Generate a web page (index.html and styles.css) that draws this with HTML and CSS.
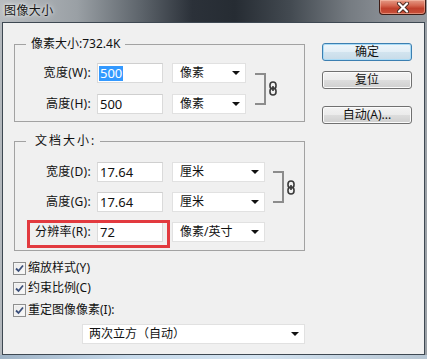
FILE: index.html
```html
<!DOCTYPE html>
<html lang="zh-CN">
<head>
<meta charset="utf-8">
<title>图像大小</title>
<link rel="stylesheet" href="styles.css">
</head>
<body>
<div class="win">
  <div class="titlebar">
    <span class="title">图像大小</span>
    <div class="close">
      <svg width="14" height="11" viewBox="0 0 14 11">
        <path d="M3 1.5 L11 9.5 M11 1.5 L3 9.5" stroke="#4a2a22" stroke-width="4" stroke-linecap="round"/>
        <path d="M3 1.5 L11 9.5 M11 1.5 L3 9.5" stroke="#ffffff" stroke-width="2.2" stroke-linecap="round"/>
      </svg>
    </div>
  </div>
  <div class="client">
    <div class="leftcol">
      <fieldset class="group g1">
        <legend>像素大小:732.4K</legend>
        <div class="pair">
          <div class="rows gap11">
            <div class="row">
              <span class="lbl">宽度(W):</span>
              <div class="input"><span class="hl">500</span></div>
              <div class="select w74"><span>像素</span><i class="arrow"></i></div>
            </div>
            <div class="row">
              <span class="lbl">高度(H):</span>
              <div class="input"><span>500</span></div>
              <div class="select w74"><span>像素</span><i class="arrow"></i></div>
            </div>
          </div>
          <div class="link l1">
            <span class="bracket"></span>
            <svg class="chain" width="8" height="15" viewBox="0 0 8 15">
              <rect x="1" y="1" width="6" height="7" rx="3" fill="none" stroke="#3a3a3a" stroke-width="1.6"/>
              <rect x="1" y="7" width="6" height="7" rx="3" fill="none" stroke="#3a3a3a" stroke-width="1.6"/>
              <path d="M4 5 V10" stroke="#3a3a3a" stroke-width="1.6"/>
            </svg>
          </div>
        </div>
      </fieldset>

      <fieldset class="group g2">
        <legend class="spaced">文档大小:</legend>
        <div class="pair">
          <div class="rows gap10">
            <div class="row">
              <span class="lbl">宽度(D):</span>
              <div class="input"><span>17.64</span></div>
              <div class="select w93"><span>厘米</span><i class="arrow"></i></div>
            </div>
            <div class="row">
              <span class="lbl">高度(G):</span>
              <div class="input"><span>17.64</span></div>
              <div class="select w93"><span>厘米</span><i class="arrow"></i></div>
            </div>
          </div>
          <div class="link l2">
            <span class="bracket"></span>
            <svg class="chain" width="8" height="15" viewBox="0 0 8 15">
              <rect x="1" y="1" width="6" height="7" rx="3" fill="none" stroke="#3a3a3a" stroke-width="1.6"/>
              <rect x="1" y="7" width="6" height="7" rx="3" fill="none" stroke="#3a3a3a" stroke-width="1.6"/>
              <path d="M4 5 V10" stroke="#3a3a3a" stroke-width="1.6"/>
            </svg>
          </div>
        </div>
        <div class="row res">
          <span class="lbl">分辨率(R):</span>
          <div class="input"><span>72</span></div>
          <div class="select w93"><span>像素/英寸</span><i class="arrow"></i></div>
          <span class="redbox"></span>
        </div>
      </fieldset>

      <div class="checks">
        <div class="check c1"><span class="box"><svg width="9" height="9" viewBox="0 0 9 9"><path d="M1 4.5 L3.5 7 L8 1.5" fill="none" stroke="#3b4f7a" stroke-width="1.8"/></svg></span><span>缩放样式(Y)</span></div>
        <div class="check"><span class="box"><svg width="9" height="9" viewBox="0 0 9 9"><path d="M1 4.5 L3.5 7 L8 1.5" fill="none" stroke="#3b4f7a" stroke-width="1.8"/></svg></span><span>约束比例(C)</span></div>
        <div class="check c3"><span class="box"><svg width="9" height="9" viewBox="0 0 9 9"><path d="M1 4.5 L3.5 7 L8 1.5" fill="none" stroke="#3b4f7a" stroke-width="1.8"/></svg></span><span>重定图像像素(I):</span></div>
      </div>
      <div class="select wide"><span>两次立方（自动）</span><i class="arrow"></i></div>
    </div>

    <div class="buttons">
      <div class="btn default">确定</div>
      <div class="btn">复位</div>
      <div class="btn auto">自动(A)...</div>
    </div>
  </div>
  <div class="bottomglass"></div>
</div>
</body>
</html>
```
FILE: styles.css
```css
html, body {
  margin: 0;
  padding: 0;
}
body {
  width: 427px;
  height: 359px;
  overflow: hidden;
  font-family: "Noto Sans", "Noto Sans CJK SC", sans-serif;
  font-size: 12px;
  line-height: 16px;
  color: #111;
}
.win {
  width: 427px;
  height: 359px;
  display: flex;
  flex-direction: column;
  background: linear-gradient(to right, #b3b8bd 0%, #9ea4aa 50%, #9aa0a6 100%);
}
.titlebar {
  height: 22px;
  flex: none;
  display: flex;
  align-items: flex-start;
  justify-content: space-between;
  background: linear-gradient(to right, #b8bcc0 0%, #9aa0a5 18%, #5d646b 33%, #2b3139 45%, #262c33 55%, #434a51 68%, #767c82 82%, #8d9298 92%, #969ba0 100%);
}
.title {
  margin: 3px 0 0 4px;
  line-height: 16px;
  font-size: 12px;
  letter-spacing: 0.4px;
  color: #161616;
  text-shadow: 0 0 6px rgba(255,255,255,0.9), 0 0 3px rgba(255,255,255,0.8);
}
.close {
  width: 47px;
  height: 15px;
  margin-right: 1px;
  box-sizing: border-box;
  border: 1px solid #3d1c15;
  border-top: none;
  border-radius: 0 0 4px 4px;
  background: linear-gradient(#e59a86 0%, #d4654f 40%, #c0402c 60%, #c9513a 100%);
  box-shadow: inset 0 0 0 1px rgba(255,210,190,0.45);
  display: flex;
  align-items: center;
  justify-content: center;
}
.client {
  flex: none;
  margin-left: 2px;
  width: 423px;
  height: 333px;
  box-sizing: border-box;
  border: 1px solid #3e4852;
  background: #f0f0f0;
  display: flex;
  align-items: flex-start;
  padding: 14px 0 0 10px;
}
.bottomglass {
  flex: 1;
  background: linear-gradient(to right, #9fb3c6 0%, #c6d9ea 30%, #d3e3f1 60%, #b7c6d3 100%);
}
.leftcol {
  width: 292px;
  display: flex;
  flex-direction: column;
}
.group {
  margin: 0 0 0 1px;
  width: 291px;
  box-sizing: border-box;
  border: 1px solid #a2a2a2;
  padding: 0;
  min-width: 0;
}
.group legend {
  margin-left: 11px;
  padding: 0 5px;
  line-height: 14px;
  font-size: 12px;
}
.group legend.spaced {
  padding: 0 4px 0 9px;
  letter-spacing: 2px;
}
.g1 {
  padding: 12px 0 7px 0;
}
.g2 {
  margin-top: 12px;
  padding: 14px 0 8px 0;
}
.pair {
  display: flex;
  align-items: center;
}
.rows {
  display: flex;
  flex-direction: column;
}
.gap11 { gap: 11px; }
.gap10 { gap: 10px; }
.row {
  height: 20px;
  display: flex;
  align-items: center;
}
.row.res {
  margin-top: 10px;
  position: relative;
}
.lbl {
  width: 76px;
  margin-right: 6px;
  text-align: right;
  white-space: nowrap;
  letter-spacing: 0.3px;
}
.input {
  width: 66px;
  height: 20px;
  box-sizing: border-box;
  border: 1px solid #dadada;
  border-top-color: #cfcfcf;
  background: #fff;
  margin-right: 9px;
  display: flex;
  align-items: center;
  padding-left: 1px;
  font-size: 13px;
}
.input span {
  padding: 0 1px;
  line-height: 15px;
}
.input .hl {
  background: #3399ff;
  color: #fff;
}
.select {
  height: 20px;
  box-sizing: border-box;
  border: 1px solid #e1e1e1;
  background: #fff;
  display: flex;
  align-items: center;
  justify-content: space-between;
  padding: 0 5px 0 7px;
  font-size: 12px;
}
.w74 { width: 74px; }
.w93 { width: 93px; }
.arrow {
  width: 0;
  height: 0;
  border-left: 4px solid transparent;
  border-right: 4px solid transparent;
  border-top: 4px solid #111;
}
.link {
  display: flex;
  align-items: center;
}
.l1 { margin-left: 9px; }
.l2 { margin-left: 8px; }
.bracket {
  width: 9px;
  height: 28px;
  border: 2px solid #8c8c8c;
  border-left: none;
}
.chain {
  margin-left: 3px;
}
.redbox {
  position: absolute;
  left: 12px;
  top: -2px;
  width: 143px;
  height: 28px;
  box-sizing: border-box;
  border: 3px solid #e23a3f;
}
.checks {
  margin-top: 7px;
  display: flex;
  flex-direction: column;
}
.check {
  height: 20px;
  display: flex;
  align-items: center;
}
.check.c3 { margin-top: 2px; }
.box {
  width: 13px;
  height: 13px;
  box-sizing: border-box;
  border: 1px solid #8e8f8f;
  background: linear-gradient(135deg, #e9e9e9 0%, #fafafa 100%);
  box-shadow: inset 0 0 0 1px #f4f4f4;
  margin-right: 2px;
  display: flex;
  align-items: center;
  justify-content: center;
}
.select.wide {
  margin: 4px 0 0 69px;
  width: 223px;
  padding-left: 6px;
}
.buttons {
  margin: 6px 0 0 17px;
  display: flex;
  flex-direction: column;
}
.btn {
  width: 90px;
  height: 18px;
  box-sizing: border-box;
  border: 1px solid #707070;
  border-radius: 3px;
  background: linear-gradient(#f3f3f3 0%, #ebebeb 50%, #dddddd 51%, #cfcfcf 100%);
  box-shadow: inset 0 0 0 1px #fbfbfb;
  display: flex;
  align-items: center;
  justify-content: center;
  font-size: 12px;
  line-height: 14px;
  margin-bottom: 10px;
  color: #111;
}
.btn.default {
  border-color: #3c7fb1;
  background: linear-gradient(#eef6fb 0%, #e2eef6 50%, #d2e4ef 51%, #c8dbe8 100%);
  box-shadow: inset 0 0 0 1px #a9dbf6;
}
.btn.auto {
  margin-top: 7px;
}
```
